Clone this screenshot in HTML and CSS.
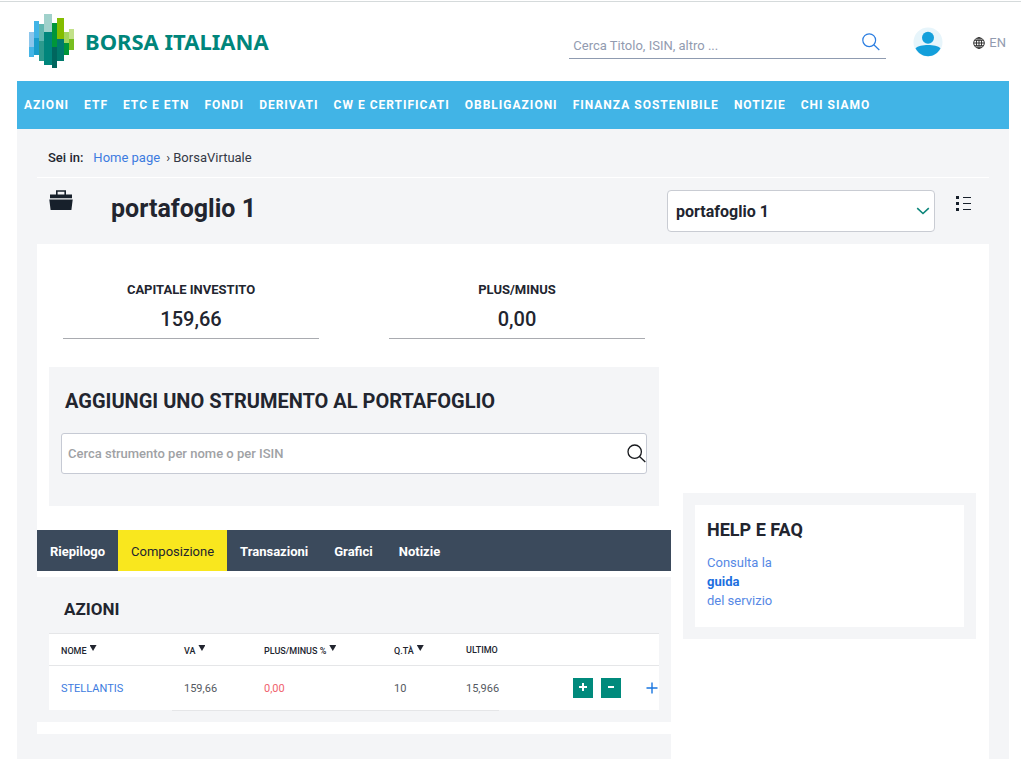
FILE: index.html
```html
<!DOCTYPE html>
<html lang="it">
<head>
<meta charset="utf-8">
<meta name="viewport" content="width=device-width, initial-scale=1">
<title>BorsaVirtuale - Borsa Italiana</title>
<link rel="stylesheet" href="styles.css">
</head>
<body>
<div class="page">
  <header class="header">
    <a class="logo" href="#">
      <svg class="logo-mark" width="45" height="54" viewBox="0 0 45 54" shape-rendering="crispEdges" aria-hidden="true">
        <path fill="#8dc6ec" d="M0 18h5v15H0z"/><path fill="#45b5e6" d="M0 33h5v10H0z"/>
        <path fill="#41b4e6" d="M5 7h5v17H5z"/><path fill="#1b9dcb" d="M5 24h5v17H5z"/>
        <path fill="#5fb6b0" d="M10 10h5v17h-5z"/><path fill="#2c9a8d" d="M10 27h5v20h-5z"/>
        <path fill="#a0d1cb" d="M15 0h8v18h-8z"/><path fill="#00857b" d="M15 18h8v33h-8z"/>
        <path fill="#009639" d="M23 9h5v24h-5z"/><path fill="#00665e" d="M23 33h5v21h-5z"/>
        <path fill="#84bd00" d="M28 4h7v21h-7z"/><path fill="#007a6c" d="M28 25h7v22h-7z"/>
        <path fill="#a4d65e" d="M35 18h5v11h-5z"/><path fill="#009639" d="M35 29h5v12h-5z"/>
        <path fill="#c2e189" d="M40 15h5v10h-5z"/><path fill="#78be20" d="M40 25h5v11h-5z"/>
      </svg>
      <span class="logo-text">BORSA ITALIANA</span>
    </a>
    <form class="site-search">
      <input class="site-search-input" type="search" aria-label="Cerca nel sito" placeholder="Cerca Titolo, ISIN, altro ...">
      <button class="icon-button site-search-button" type="button" aria-label="Cerca">
        <svg width="18" height="18" viewBox="0 0 18 18" fill="none" stroke="currentColor" stroke-width="1.2" aria-hidden="true"><circle cx="7.2" cy="7.2" r="6.4"/><path d="M11.8 11.8 17.3 17"/></svg>
      </button>
    </form>
    <button class="icon-button avatar" type="button" aria-label="Profilo">
      <svg width="30" height="30" viewBox="0 0 30 30" aria-hidden="true"><circle cx="15" cy="15" r="14.5" fill="#e7f5fb"/><circle cx="15" cy="10.8" r="6" fill="#139fdb"/><path fill="#139fdb" d="M2.5 21.2C7 16.8 23 16.8 27.5 21.2 25 26 20.5 29.2 15 29.2S5 26 2.5 21.2Z"/></svg>
    </button>
    <a class="lang" href="#">
      <svg width="12" height="12" viewBox="0 0 12 12" fill="none" stroke="#222" stroke-width="0.9" aria-hidden="true"><circle cx="6" cy="6" r="5.3"/><ellipse cx="6" cy="6" rx="2.6" ry="5.3"/><path d="M6 .7v10.600M.7 6h10.600M1.500 3.300h9M1.500 8.700h9"/></svg>
      <span>EN</span>
    </a>
  </header>

  <nav class="main-nav">
    <a href="#">AZIONI</a><a href="#">ETF</a><a href="#">ETC E ETN</a><a href="#">FONDI</a><a href="#">DERIVATI</a><a href="#">CW E CERTIFICATI</a><a href="#">OBBLIGAZIONI</a><a href="#">FINANZA SOSTENIBILE</a><a href="#">NOTIZIE</a><a href="#">CHI SIAMO</a>
  </nav>

  <main class="content">
    <div class="breadcrumb">
      <strong>Sei in:</strong>
      <a href="#">Home page</a>
      <span>› BorsaVirtuale</span>
    </div>

    <div class="title-bar">
      <svg class="briefcase" width="24" height="20" viewBox="0 0 24 20" aria-hidden="true"><path fill="none" stroke="#17202b" stroke-width="1.6" d="M7.8 5V1h8.4v4"/><path fill="#17202b" d="M1 4.500h22v3.700H1zM.3 9.500h23.400l-1.300 10.500H1.600z"/></svg>
      <h1 class="title">portafoglio 1</h1>
      <div class="select-wrap">
        <select class="select" aria-label="Portafoglio"><option>portafoglio 1</option></select>
        <svg class="chevron" width="14" height="8" viewBox="0 0 14 8" fill="none" stroke="#0b857a" stroke-width="1.6" aria-hidden="true"><path d="M1.200 1.200 7 6.500l5.800-5.300"/></svg>
      </div>
      <button class="icon-button list-button" type="button" aria-label="Elenco">
        <svg width="16" height="16" viewBox="0 0 16 16" fill="#17202b" shape-rendering="crispEdges" aria-hidden="true"><path d="M0 0h3v3H0zM0 6h3v3H0zM0 12h3v3H0zM7 1h8v1H7zM7 7h8v1H7zM7 13h8v1H7z"/></svg>
      </button>
    </div>

    <div class="panel">
      <div class="primary">
        <div class="stats">
          <div class="stat"><div class="stat-label">CAPITALE INVESTITO</div><div class="stat-value">159,66</div></div>
          <div class="stat"><div class="stat-label">PLUS/MINUS</div><div class="stat-value">0,00</div></div>
        </div>

        <section class="add-box">
          <h2 class="add-title">AGGIUNGI UNO STRUMENTO AL PORTAFOGLIO</h2>
          <form class="add-search">
            <input class="add-input" type="text" aria-label="Cerca strumento" placeholder="Cerca strumento per nome o per ISIN">
            <button class="icon-button add-button" type="button" aria-label="Cerca strumento">
              <svg width="19" height="19" viewBox="0 0 19 19" fill="none" stroke="currentColor" stroke-width="1.3" aria-hidden="true"><circle cx="7.700" cy="7.700" r="6.700"/><path d="m12.500 12.500 5.800 5.500"/></svg>
            </button>
          </form>
        </section>

        <nav class="tabs">
          <a class="tab" href="#">Riepilogo</a><a class="tab tab-active" href="#">Composizione</a><a class="tab" href="#">Transazioni</a><a class="tab" href="#">Grafici</a><a class="tab" href="#">Notizie</a>
        </nav>

        <section class="holdings">
          <h2 class="holdings-title">AZIONI</h2>
          <table class="table">
            <colgroup><col class="col-name"><col class="col-va"><col class="col-pm"><col class="col-qty"><col class="col-last"><col></colgroup>
            <thead>
              <tr>
                <th><span class="sort">NOME</span></th>
                <th><span class="sort">VA</span></th>
                <th><span class="sort">PLUS/MINUS %</span></th>
                <th><span class="sort">Q.TÀ</span></th>
                <th>ULTIMO</th>
                <td></td>
              </tr>
            </thead>
            <tbody>
              <tr>
                <td><a href="#">STELLANTIS</a></td>
                <td class="ruled">159,66</td>
                <td class="ruled loss">0,00</td>
                <td class="ruled">10</td>
                <td class="ruled">15,966</td>
                <td>
                  <div class="actions">
                    <button class="trade" type="button" aria-label="Aggiungi"><svg width="8" height="8" viewBox="0 0 8 8" aria-hidden="true"><path fill="#fff" d="M3 0h2v3h3v2H5v3H3V5H0V3h3z"/></svg></button>
                    <button class="trade" type="button" aria-label="Rimuovi"><svg width="8" height="8" viewBox="0 0 8 8" aria-hidden="true"><path fill="#fff" d="M1 3h6v2H1z"/></svg></button>
                    <button class="icon-button expand" type="button" aria-label="Dettagli"><svg width="12" height="12" viewBox="0 0 12 12" stroke="#1976e0" stroke-width="1.4" aria-hidden="true"><path d="M6 .5v11M.5 6h11"/></svg></button>
                  </div>
                </td>
              </tr>
            </tbody>
          </table>
        </section>
        <section class="next-section"></section>
      </div>

      <aside class="help">
        <div class="help-card">
          <h2 class="help-title">HELP E FAQ</h2>
          <a class="help-link" href="#"><span>Consulta la</span><strong>guida</strong><span>del servizio</span></a>
        </div>
      </aside>
    </div>
  </main>
</div>
</body>
</html>
```
FILE: styles.css
```css
* { box-sizing: border-box; }

body {
  margin: 0;
  background: #fff;
  color: #22252f;
  font-family: Roboto, "Liberation Sans", sans-serif;
  font-size: 13px;
  line-height: 19px;
}

a { color: #3d7be0; text-decoration: none; }
h1, h2 { margin: 0; font-weight: 700; }
input, select, button { font: inherit; color: inherit; }

.page {
  display: flex;
  flex-direction: column;
  min-height: 100vh;
  padding-top: 1px;
}

.icon-button {
  display: flex;
  padding: 0;
  border: 0;
  background: none;
  cursor: pointer;
}

.header {
  display: flex;
  align-items: flex-start;
  height: 80px;
  padding: 12px 15px 0 29px;
  border-top: 1px solid #d5dadb;
}

.logo { display: flex; gap: 11px; margin-right: auto; }

.logo-text {
  color: #00857b;
  font-family: "Noto Sans", sans-serif;
  font-size: 22px;
  font-weight: 700;
  line-height: 54px;
}

.site-search {
  display: flex;
  width: 317px;
  height: 45px;
  padding: 19px 6px 0 4px;
  border-bottom: 1px solid #8f9bb0;
}

.site-search-input {
  flex: 1;
  min-width: 0;
  height: 24px;
  padding: 0;
  border: 0;
  outline: 0;
  background: none;
}

.site-search-input::placeholder { color: #929bb0; opacity: 1; }
.site-search-button { align-self: flex-start; color: #2a7de1; }
.avatar { margin: 13px 30px 0 27px; }

.lang {
  display: flex;
  align-items: center;
  gap: 4px;
  margin-top: 19px;
  color: #929bb0;
}

.main-nav {
  display: flex;
  flex-wrap: wrap;
  align-items: center;
  gap: 0 15px;
  min-height: 48px;
  margin: 0 12px 0 17px;
  padding: 0 7px;
  background: #41b4e6;
}

.main-nav a {
  color: #fff;
  font-size: 12px;
  font-weight: 700;
  letter-spacing: 1px;
  white-space: nowrap;
}

.content {
  display: flex;
  flex: 1;
  flex-direction: column;
  margin: 0 12px 0 17px;
  padding: 0 20px;
  background: #f4f5f7;
}

.breadcrumb {
  display: flex;
  gap: 6px;
  height: 49px;
  padding: 19px 11px 0;
  border-bottom: 1px solid #fff;
}

.breadcrumb strong { margin-right: 4px; font-weight: 500; }
.breadcrumb span { color: #333845; }

.title-bar {
  display: flex;
  align-items: flex-start;
  height: 66px;
  padding: 12px 17px 0 12px;
}

.title {
  margin: 3px auto 0 38px;
  font-size: 25px;
  line-height: 32px;
}

.select-wrap { position: relative; width: 268px; }

.select {
  width: 100%;
  height: 42px;
  padding: 0 36px 0 8px;
  border: 1px solid #c9ccd3;
  border-radius: 4px;
  background: #fff;
  appearance: none;
  font-size: 16px;
  font-weight: 700;
}

.chevron { position: absolute; top: 17px; right: 5px; pointer-events: none; }
.list-button { margin: 6px 0 0 21px; }

.panel {
  display: flex;
  flex: 1;
  gap: 12px;
  padding-right: 13px;
  background: #fff;
}

.primary { display: flex; flex: 1; flex-direction: column; min-width: 0; }

.stats {
  display: flex;
  gap: 70px;
  padding: 35px 26px 28px;
  text-align: center;
}

.stat { flex: 1; border-bottom: 1px solid #a9abb0; }
.stat-label { font-weight: 700; line-height: 22px; }
.stat-value { padding: 4px 0 5px; font-size: 20px; font-weight: 500; line-height: 28px; }

.add-box { margin: 0 12px 24px; padding: 20px 12px 32px; background: #f4f5f7; }
.add-title { padding-left: 4px; font-size: 20px; line-height: 28px; }

.add-search {
  display: flex;
  align-items: center;
  height: 41px;
  margin-top: 18px;
  padding: 0 0 0 6px;
  border: 1px solid #c6cad4;
  border-radius: 3px;
  background: #fff;
}

.add-input {
  flex: 1;
  min-width: 0;
  padding: 0;
  border: 0;
  outline: 0;
  background: none;
  font-weight: 500;
}

.add-input::placeholder { color: #9fa2a5; opacity: 1; }
.add-button { color: #17191d; }

.tabs { display: flex; flex-wrap: wrap; background: #3b4a5c; }

.tab {
  padding: 12px 13px 10px;
  color: #fff;
  font-weight: 700;
}

.tab-active { background: #f9e71e; color: #22252f; font-weight: 400; }

.holdings { margin: 6px 0 12px; padding: 20px 12px 12px; background: #f4f5f7; }
.holdings-title { padding: 0 15px 12px; font-size: 17px; line-height: 24px; }

.table {
  width: 100%;
  border-collapse: separate;
  border-spacing: 0;
  background: #fff;
  table-layout: fixed;
}

.col-name { width: 123px; }
.col-va { width: 80px; }
.col-pm { width: 130px; }
.col-qty { width: 72px; }
.col-last { width: 45px; }
.table th, .table td { padding: 0 0 0 12px; text-align: left; }

.table thead th, .table thead td {
  height: 33px;
  border-top: 1px solid #e5e6e8;
  border-bottom: 1px solid #e5e6e8;
}

.table th { font-size: 9px; font-weight: 500; line-height: 12px; white-space: nowrap; }
.table tbody td { height: 44px; color: #555961; font-size: 11px; white-space: nowrap; }
.table tbody td a { color: #3d7be0; }
.table tbody .ruled { box-shadow: 0 1px 0 #e5e6e8; }
.table tbody .loss { color: #f0626d; }

.sort { display: inline-flex; gap: 3px; padding-top: 3px; }

.sort::after {
  width: 7px;
  height: 6px;
  background: #22252f;
  clip-path: polygon(0 0, 100% 0, 50% 100%);
  content: "";
}

.actions { display: flex; align-items: center; justify-content: flex-end; gap: 8px; padding-right: 1px; }

.trade {
  display: flex;
  align-items: center;
  justify-content: center;
  width: 20px;
  height: 20px;
  padding: 0 0 2px;
  border: 0;
  background: #008a7c;
}

.expand { margin-left: 17px; }
.next-section { flex: 1; min-height: 25px; background: #f4f5f7; }

.help {
  align-self: flex-start;
  width: 293px;
  margin-top: 249px;
  padding: 12px;
  background: #f4f5f7;
}

.help-card { padding: 12px 12px 17px; background: #fff; }
.help-title { margin-bottom: 10px; font-size: 18px; line-height: 26px; }
.help-link { display: inline-flex; flex-direction: column; color: #5688e5; }
.help-link strong { color: #1c6fe0; font-weight: 700; }
```
